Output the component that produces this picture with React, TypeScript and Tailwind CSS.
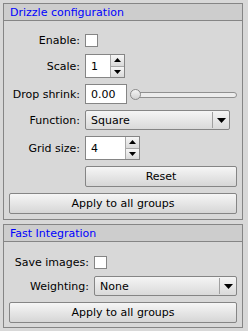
import React from "react";

function Tri({ down = false, w = 7, h = 4 }: { down?: boolean; w?: number; h?: number }) {
  return (
    <svg width={w} height={h} viewBox={`0 0 ${w} ${h}`} className="block">
      {down ? (
        <path d={`M0 0L${w} 0L${w / 2} ${h}Z`} fill="#000" />
      ) : (
        <path d={`M0 ${h}L${w / 2} 0L${w} ${h}Z`} fill="#000" />
      )}
    </svg>
  );
}

function Label({ children, w }: { children: React.ReactNode; w: string }) {
  return <div className={`${w} text-right shrink-0 mr-[5px] whitespace-nowrap`}>{children}</div>;
}

function Checkbox() {
  return <div className="w-[13px] h-[13px] border border-[#858585] bg-white" />;
}

function Spin({ value, w }: { value: string; w: string }) {
  return (
    <div className={`flex h-[24px] ${w} border border-[#858585] bg-white`}>
      <div className="flex-1 flex items-center pl-[5px]">{value}</div>
      <div className="flex flex-col w-[14px] border-l border-[#a8a8a8]">
        <div className="flex-1 flex items-center justify-center bg-linear-to-b from-[#f6f6f6] to-[#dadada] border-b border-[#a8a8a8]">
          <Tri />
        </div>
        <div className="flex-1 flex items-center justify-center bg-linear-to-b from-[#f6f6f6] to-[#dadada]">
          <Tri down />
        </div>
      </div>
    </div>
  );
}

function Combo({ value, w }: { value: string; w: string }) {
  return (
    <div className={`flex h-[20px] ${w} border border-[#858585] rounded-[2px] bg-linear-to-b from-[#f5f5f5] to-[#dadada]`}>
      <div className="flex-1 flex items-center pl-[5px]">{value}</div>
      <div className="w-[17px] border-l border-[#a0a0a0] flex items-center justify-center my-[1px]">
        <Tri down w={9} h={5} />
      </div>
    </div>
  );
}

function Btn({ children, w }: { children: React.ReactNode; w: string }) {
  return (
    <div className={`h-[21px] ${w} border border-[#858585] rounded-[2px] bg-linear-to-b from-[#f6f6f6] to-[#d6d6d6] flex items-center justify-center`}>
      {children}
    </div>
  );
}

function Panel({ title, children, className = "" }: { title: string; children: React.ReactNode; className?: string }) {
  return (
    <div className={`w-[240px] border border-[#858585] ${className}`}>
      <div className="h-[17px] bg-[#cdcdcd] border-b border-[#858585] pl-[6px] flex items-center text-[#0000ff]">
        {title}
      </div>
      {children}
    </div>
  );
}

export default function App() {
  return (
    <div className="w-[248px] h-[331px] bg-[#d8d8d8] pt-[3px] pl-[3px] font-['DejaVu_Sans',sans-serif] text-[11px] leading-none text-black">
      <Panel title="Drizzle configuration">
        <div className="px-[5px] pt-[13px] pb-[5px] flex flex-col">
          <div className="flex items-center h-[13px]">
            <Label w="w-[71px]">Enable:</Label>
            <Checkbox />
          </div>
          <div className="flex items-center mt-[7px]">
            <Label w="w-[71px]">Scale:</Label>
            <Spin value="1" w="w-[40px]" />
          </div>
          <div className="flex items-center mt-[6px] h-[20px]">
            <Label w="w-[71px]">Drop shrink:</Label>
            <div className="w-[42px] h-[20px] border border-[#858585] bg-white flex items-center pl-[5px]">0.00</div>
            <div className="relative flex-1 h-[20px] ml-[3px]">
              <div className="absolute left-[6px] right-0 top-[8px] h-[6px] rounded-full border border-[#909090] bg-[#ececec]" />
              <div className="absolute left-0 top-[5px] w-[11px] h-[11px] rounded-full border border-[#8a8a8a] bg-linear-to-b from-[#f4f4f4] to-[#d2d2d2]" />
            </div>
          </div>
          <div className="flex items-center mt-[6px]">
            <Label w="w-[71px]">Function:</Label>
            <Combo value="Square" w="w-[145px]" />
          </div>
          <div className="flex items-center mt-[6px]">
            <Label w="w-[71px]">Grid size:</Label>
            <Spin value="4" w="w-[55px]" />
          </div>
          <div className="flex mt-[6px] pl-[76px]">
            <Btn w="w-[152px]">Reset</Btn>
          </div>
          <div className="flex mt-[6px]">
            <Btn w="w-[228px]">Apply to all groups</Btn>
          </div>
        </div>
      </Panel>
      <Panel title="Fast Integration" className="mt-[4px]">
        <div className="px-[5px] pt-[14px] pb-[4px] flex flex-col">
          <div className="flex items-center h-[13px]">
            <Label w="w-[80px]">Save images:</Label>
            <Checkbox />
          </div>
          <div className="flex items-center mt-[7px]">
            <Label w="w-[80px]">Weighting:</Label>
            <Combo value="None" w="w-[143px]" />
          </div>
          <div className="flex mt-[6px]">
            <Btn w="w-[228px]">Apply to all groups</Btn>
          </div>
        </div>
      </Panel>
    </div>
  );
}
